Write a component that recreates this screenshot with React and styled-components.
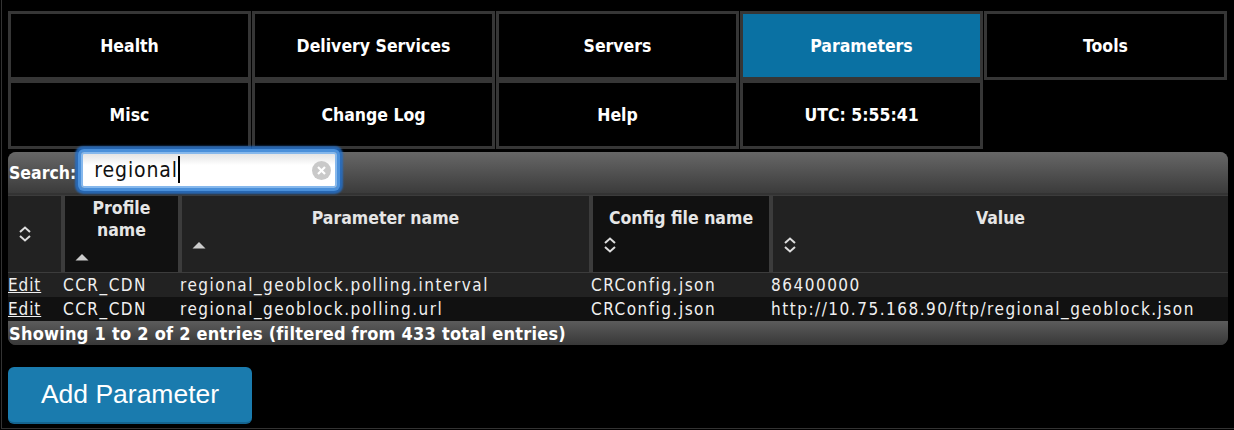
import React from "react";
import styled, { createGlobalStyle } from "styled-components";

const FONT = `"DejaVu Sans Condensed", "DejaVu Sans", sans-serif`;

const GlobalStyle = createGlobalStyle`
  html, body {
    margin: 0;
    padding: 0;
    background: #000;
  }
  body {
    font-family: ${FONT};
    color: #eee;
  }
`;

const navItems = [
  ["Health", false],
  ["Delivery Services", false],
  ["Servers", false],
  ["Parameters", true],
  ["Tools", false],
  ["Misc", false],
  ["Change Log", false],
  ["Help", false],
  ["UTC: 5:55:41", false],
];

// sorted columns show a single up arrow, the others the up/down chevrons
const columns = [
  { label: "Profile name", sorted: true, dark: true, tall: true },
  { label: "Parameter name", sorted: true, dark: false },
  { label: "Config file name", sorted: false, dark: true },
  { label: "Value", sorted: false, dark: false },
];

const rows = [
  {
    profile: "CCR_CDN",
    name: "regional_geoblock.polling.interval",
    config: "CRConfig.json",
    value: "86400000",
  },
  {
    profile: "CCR_CDN",
    name: "regional_geoblock.polling.url",
    config: "CRConfig.json",
    value: "http://10.75.168.90/ftp/regional_geoblock.json",
  },
];

const GRID = "53px 113px 407px 176px 455px";

const SortBoth = () => (
  <svg width="14" height="16" viewBox="0 0 14 16">
    <path
      d="M2 6 L7 1.5 L12 6 M2 10 L7 14.5 L12 10"
      fill="none"
      stroke="#ddd"
      strokeWidth="2"
    />
  </svg>
);

const SortUp = () => (
  <svg width="14" height="8" viewBox="0 0 14 8">
    <path d="M0.5 7.5 L7 1 L13.5 7.5 Z" fill="#ccc" />
  </svg>
);

const App = () => {
  return (
    <>
      <GlobalStyle />
      <Page>
        <Nav>
          {navItems.map(([label, active]) => (
            <NavTile key={label} $active={active}>
              {label}
            </NavTile>
          ))}
        </Nav>

        <TableWrap>
          <Toolbar>
            <SearchLabel>Search:</SearchLabel>
            <SearchBox>
              <SearchText>regional</SearchText>
              <Caret />
              <ClearButton>
                <svg width="19" height="19" viewBox="0 0 19 19">
                  <circle cx="9.5" cy="9.5" r="9.5" fill="#c9c9c9" />
                  <path
                    d="M6 6 L13 13 M13 6 L6 13"
                    stroke="#fff"
                    strokeWidth="2.2"
                  />
                </svg>
              </ClearButton>
            </SearchBox>
          </Toolbar>

          <HeadRow>
            <HeadCell>
              <FirstIcon>
                <SortBoth />
              </FirstIcon>
            </HeadCell>
            {columns.map((c) => (
              <HeadCell key={c.label} $dark={c.dark}>
                <HeadLabel $tall={c.tall}>{c.label}</HeadLabel>
                <IconSlot $gap={c.sorted ? 12 : 8}>
                  {c.sorted ? <SortUp /> : <SortBoth />}
                </IconSlot>
              </HeadCell>
            ))}
          </HeadRow>

          {rows.map((r, i) => (
            <BodyRow key={r.name} $odd={i % 2 === 1}>
              <EditLink>Edit</EditLink>
              <Cell>{r.profile}</Cell>
              <Cell>{r.name}</Cell>
              <Cell>{r.config}</Cell>
              <Cell>{r.value}</Cell>
            </BodyRow>
          ))}

          <Footer>
            Showing 1 to 2 of 2 entries (filtered from 433 total entries)
          </Footer>
        </TableWrap>

        <AddButton>Add Parameter</AddButton>
      </Page>
    </>
  );
};

export default App;

const Page = styled.div`
  min-height: 429px;
  box-sizing: border-box;
  padding: 11px 7px 0 7px;
  border-left: 1px solid #333;
  border-bottom: 1px solid #333;
  margin-left: 1px;
`;

const Nav = styled.div`
  display: grid;
  grid-template-columns: repeat(5, 1fr);
  column-gap: 1px;
  width: 1219px;
  margin-left: -1px;
`;

const NavTile = styled.div`
  height: 69px;
  box-sizing: border-box;
  border: 3px solid #363636;
  background: ${(p) => (p.$active ? "#0a71a3" : "#000")};
  display: flex;
  align-items: center;
  justify-content: center;
  padding-top: 1px;
  font-family: ${FONT};
  font-weight: bold;
  font-size: 17.5px;
  color: #fff;
`;

const TableWrap = styled.div`
  margin-top: 3px;
  margin-left: -1px;
  width: 1220px;
  background: #3c3c3c;
  border-radius: 8px;
`;

const Toolbar = styled.div`
  height: 41px;
  border-radius: 8px 8px 0 0;
  background: linear-gradient(#676767, #3b3b3b);
  display: flex;
  align-items: center;
  padding-left: 1px;
  border-bottom: 2px solid #333;
`;

const SearchLabel = styled.span`
  font-family: ${FONT};
  font-weight: bold;
  font-size: 17.5px;
  color: #fff;
`;

const SearchBox = styled.div`
  position: relative;
  margin-left: 5px;
  margin-top: -6px;
  width: 256px;
  height: 36px;
  box-sizing: border-box;
  background: linear-gradient(#e4e4e4, #fff 35%);
  border: 2px solid #86b8ec;
  box-shadow: 0 0 0 3px #4b90da, 0 0 2px 6px rgba(35, 110, 200, 0.85);
  border-radius: 3px;
  display: flex;
  align-items: center;
  padding-left: 11px;
`;

const SearchText = styled.span`
  font-family: ${FONT};
  font-size: 21px;
  letter-spacing: 0.9px;
  color: #111;
`;

const Caret = styled.span`
  width: 1.5px;
  height: 27px;
  background: #000;
`;

const ClearButton = styled.span`
  position: absolute;
  right: 4px;
  top: 7px;
  display: flex;
`;

const HeadRow = styled.div`
  display: grid;
  grid-template-columns: ${GRID};
  column-gap: 4px;
  padding-top: 1px;
  background: #3c3c3c;
`;

const HeadCell = styled.div`
  height: 76px;
  background: ${(p) => (p.$dark ? "#111" : "#222")};
  display: flex;
  flex-direction: column;
`;

const HeadLabel = styled.div`
  font-family: ${FONT};
  font-weight: bold;
  font-size: 17.5px;
  color: #e6e6e6;
  text-align: center;
  line-height: 22px;
  padding: ${(p) => (p.$tall ? "1px 20px 0" : "11px 4px 0")};
`;

const FirstIcon = styled.div`
  display: flex;
  padding: 30px 0 0 10px;
`;

const IconSlot = styled.div`
  display: flex;
  padding-left: 10px;
  margin-top: ${(p) => p.$gap}px;
`;

const BodyRow = styled.div`
  display: grid;
  grid-template-columns: ${GRID};
  column-gap: 4px;
  height: 24px;
  align-items: center;
  background: ${(p) => (p.$odd ? "#111" : "#222")};
  font-family: ${FONT};
  font-size: 17px;
  letter-spacing: 1.5px;
  color: #f0f0f0;
  margin-top: ${(p) => (p.$odd ? "0" : "1px")};
`;

const Cell = styled.div`
  white-space: nowrap;
  margin-left: -2px;
`;

const EditLink = styled.a`
  color: #f0f0f0;
  letter-spacing: 0.9px;
  text-decoration: underline;
  cursor: pointer;
`;

const Footer = styled.div`
  height: 24px;
  border-radius: 0 0 8px 8px;
  background: linear-gradient(#5c5c5c, #383838);
  font-family: ${FONT};
  font-weight: bold;
  font-size: 18px;
  letter-spacing: 0.25px;
  color: #fff;
  display: flex;
  align-items: center;
  padding-left: 1px;
`;

const AddButton = styled.button`
  display: block;
  margin: 22px 0 0 -1px;
  width: 244px;
  height: 57px;
  background: #1a7bae;
  border: none;
  border-bottom: 2px solid #14648f;
  border-radius: 6px;
  color: #fff;
  font-family: "Liberation Sans", Arial, sans-serif;
  font-size: 26.5px;
  cursor: pointer;
`;
